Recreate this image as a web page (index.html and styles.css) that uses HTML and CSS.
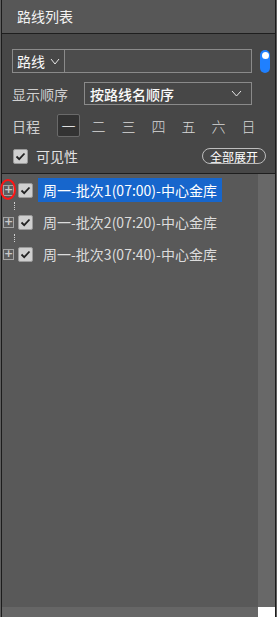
FILE: index.html
```html
<!DOCTYPE html>
<html lang="zh">
<head>
<meta charset="utf-8">
<title>路线列表</title>
<link rel="stylesheet" href="styles.css">
</head>
<body>
<div class="panel">
  <div class="header">路线列表</div>
  <div class="toolbar">
    <div class="row row-search">
      <div class="type-select">
        <span>路线</span>
        <svg class="chev" width="10" height="7" viewBox="0 0 10 7"><polyline points="1,1 5,6 9,1" fill="none" stroke="#e6e6e6" stroke-width="1"/></svg>
      </div>
      <div class="search-input"></div>
      <div class="toggle"><span class="knob"></span></div>
    </div>
    <div class="row row-order">
      <span class="label">显示顺序</span>
      <div class="order-select">
        <span>按路线名顺序</span>
        <svg class="chev" width="11" height="7" viewBox="0 0 11 7"><polyline points="1,1 5.5,6 10,1" fill="none" stroke="#e6e6e6" stroke-width="1"/></svg>
      </div>
    </div>
    <div class="row row-days">
      <span class="label">日程</span>
      <div class="days">
        <span class="day active">一</span>
        <span class="day">二</span>
        <span class="day">三</span>
        <span class="day">四</span>
        <span class="day">五</span>
        <span class="day">六</span>
        <span class="day">日</span>
      </div>
    </div>
    <div class="row row-vis">
      <span class="check"><svg width="11" height="9" viewBox="0 0 11 9"><polyline points="1.5,4.5 4.2,7.2 9.5,1.5" fill="none" stroke="#222" stroke-width="1.8"/></svg></span>
      <span class="vis-label">可见性</span>
      <span class="expand-all">全部展开</span>
    </div>
  </div>
  <div class="tree">
    <div class="list">
      <div class="node">
        <span class="expander"><span class="plus">+</span><span class="mark"></span></span>
        <span class="check"><svg width="11" height="9" viewBox="0 0 11 9"><polyline points="1.5,4.5 4.2,7.2 9.5,1.5" fill="none" stroke="#222" stroke-width="1.8"/></svg></span>
        <span class="name selected">周一-批次1(07:00)-中心金库</span>
      </div>
      <div class="connector"></div>
      <div class="node">
        <span class="expander"><span class="plus">+</span></span>
        <span class="check"><svg width="11" height="9" viewBox="0 0 11 9"><polyline points="1.5,4.5 4.2,7.2 9.5,1.5" fill="none" stroke="#222" stroke-width="1.8"/></svg></span>
        <span class="name">周一-批次2(07:20)-中心金库</span>
      </div>
      <div class="connector"></div>
      <div class="node">
        <span class="expander"><span class="plus">+</span></span>
        <span class="check"><svg width="11" height="9" viewBox="0 0 11 9"><polyline points="1.5,4.5 4.2,7.2 9.5,1.5" fill="none" stroke="#222" stroke-width="1.8"/></svg></span>
        <span class="name">周一-批次3(07:40)-中心金库</span>
      </div>
    </div>
    <div class="vscroll"></div>
  </div>
  <div class="hscroll-row">
    <div class="hscroll"></div>
    <div class="corner"></div>
  </div>
</div>
</body>
</html>
```
FILE: styles.css
```css
html, body {
  margin: 0;
  padding: 0;
}
body {
  background: #5e5e5e;
  font-family: "Noto Sans CJK SC", "Microsoft YaHei", sans-serif;
  width: 277px;
  height: 617px;
  overflow: hidden;
}
.panel {
  box-sizing: border-box;
  margin-left: 1px;
  width: 275px;
  height: 617px;
  border-left: 1px solid #1c1c1c;
  border-right: 1px solid #1c1c1c;
  display: flex;
  flex-direction: column;
  background: #474747;
}
.header {
  height: 33px;
  flex: none;
  background: #575757;
  border-bottom: 1px solid #1e1e1e;
  color: #f2f2f2;
  font-size: 14px;
  line-height: 33px;
  padding-left: 15px;
}
.toolbar {
  flex: none;
  background: #474747;
  padding: 15px 0 9px 10px;
  border-bottom: 1px solid #1e1e1e;
  display: flex;
  flex-direction: column;
}
.row {
  display: flex;
  align-items: center;
}
.row-search {
  height: 24px;
}
.type-select {
  box-sizing: border-box;
  width: 53px;
  height: 24px;
  border: 1px solid #8a8a8a;
  display: flex;
  align-items: center;
  padding-left: 4px;
  color: #fafafa;
  font-size: 14px;
  gap: 5px;
}
.search-input {
  box-sizing: border-box;
  width: 187px;
  height: 24px;
  border: 1px solid #8a8a8a;
  border-left: none;
  background: #4c4c4c;
}
.toggle {
  margin-left: 8px;
  width: 10px;
  height: 23px;
  border-radius: 5px;
  background: #1f80ff;
  display: flex;
  justify-content: center;
  padding-top: 2px;
  box-sizing: border-box;
}
.knob {
  width: 7px;
  height: 7px;
  border-radius: 50%;
  background: #ffffff;
}
.row-order {
  margin-top: 9px;
  height: 23px;
}
.label {
  color: #cfcfcf;
  font-size: 14px;
}
.row-order .label {
  width: 72px;
}
.order-select {
  box-sizing: border-box;
  width: 168px;
  height: 23px;
  border: 1px solid #8a8a8a;
  display: flex;
  align-items: center;
  justify-content: space-between;
  padding: 0 9px 0 5px;
  color: #fafafa;
  font-size: 14px;
  font-weight: 500;
}
.row-days {
  margin-top: 9px;
  height: 23px;
}
.row-days .label {
  width: 45px;
}
.days {
  display: flex;
  gap: 7px;
}
.day {
  box-sizing: border-box;
  width: 23px;
  height: 23px;
  display: flex;
  align-items: center;
  justify-content: center;
  color: #d8d8d8;
  font-size: 14px;
  font-weight: 300;
  border-radius: 2px;
}
.day.active {
  background: #333333;
  border: 1px solid #6a6a6a;
  color: #ffffff;
}
.row-vis {
  margin-top: 11px;
  height: 16px;
}
.check {
  box-sizing: border-box;
  width: 15px;
  height: 15px;
  background: #cfcfcf;
  border: 1px solid #9a9a9a;
  border-radius: 2px;
  display: flex;
  align-items: center;
  justify-content: center;
  flex: none;
}
.row-vis .check {
  margin-left: 1px;
}
.vis-label {
  margin-left: 8px;
  color: #e2e2e2;
  font-size: 14px;
}
.expand-all {
  margin-left: auto;
  margin-right: 9px;
  box-sizing: border-box;
  width: 64px;
  height: 16px;
  border: 1px solid #bdbdbd;
  border-radius: 8px;
  color: #ffffff;
  font-size: 12px;
  display: flex;
  align-items: center;
  justify-content: center;
}
.tree {
  flex: 1;
  display: flex;
  background: #595959;
  min-height: 0;
}
.list {
  flex: 1;
  padding-top: 4px;
  display: flex;
  flex-direction: column;
}
.node {
  height: 24px;
  display: flex;
  align-items: center;
}
.expander {
  position: relative;
  width: 14px;
  height: 24px;
  margin-left: 1px;
  display: flex;
  align-items: center;
  flex: none;
}
.plus {
  box-sizing: border-box;
  width: 11px;
  height: 11px;
  border: 1px solid #a5a5a5;
  background: #5d5d5d;
  color: #c8c8c8;
  font-size: 11px;
  line-height: 8px;
  text-align: center;
  font-family: "DejaVu Sans", sans-serif;
  font-weight: bold;
}
.mark {
  position: absolute;
  left: -3px;
  top: 1px;
  width: 16px;
  height: 21px;
  border: 2px solid #ff1414;
  border-radius: 50%;
  box-sizing: border-box;
}
.node .check {
  margin-left: 1px;
}
.name {
  margin-left: 5px;
  height: 24px;
  display: flex;
  align-items: center;
  padding: 0 5px;
  color: #dcdcdc;
  font-size: 14px;
  white-space: nowrap;
}
.name.selected {
  background: #1766cc;
  color: #ffffff;
}
.connector {
  height: 8px;
  margin-left: 12px;
  border-left: 1px dotted #d0d0d0;
}
.vscroll {
  width: 17px;
  flex: none;
  background: #686868;
}
.hscroll-row {
  flex: none;
  height: 10px;
  display: flex;
}
.hscroll {
  flex: 1;
  background: #666666;
}
.corner {
  width: 17px;
  background: #ffffff;
}
```
